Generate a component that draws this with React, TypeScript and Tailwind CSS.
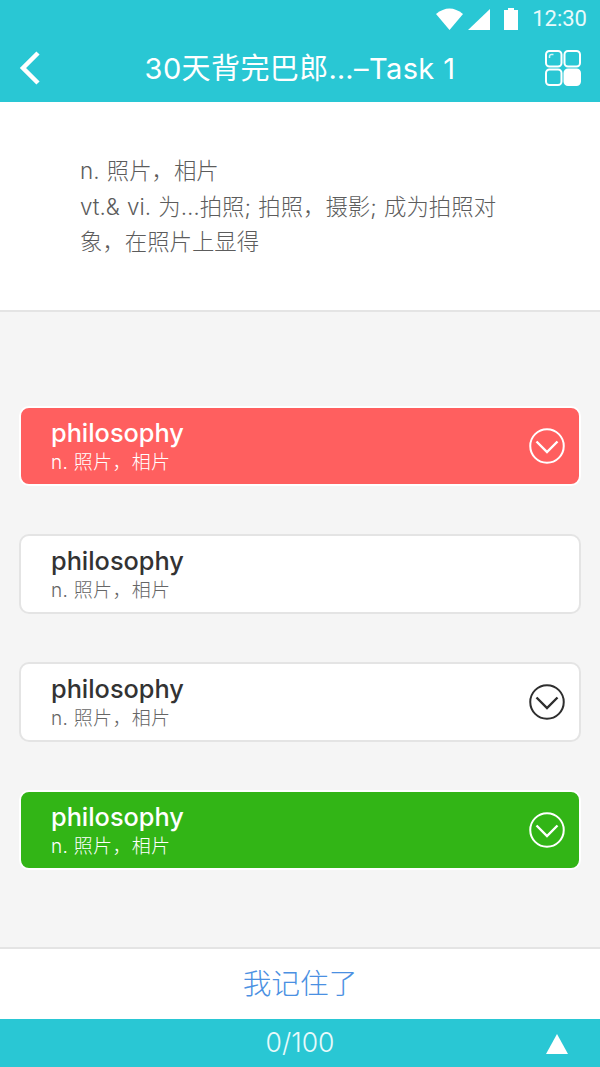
const font = "font-['Inter','Noto_Sans_CJK_SC',sans-serif]";

function ChevronCircle({ color }: { color: string }) {
  return (
    <svg width="36" height="36" viewBox="0 0 36 36" fill="none" stroke={color} strokeWidth="2" className="mt-[-1px]">
      <circle cx="18" cy="18" r="16.75" />
      <path d="M7.5 13.5 L18 24 L28.5 13.5" strokeWidth="2.4" />
    </svg>
  );
}

function WordCard({ variant, icon }: { variant: "red" | "green" | "plain"; icon?: boolean }) {
  const box =
    variant === "red"
      ? "bg-[#ff5f5f] border-[#ffffff] text-white"
      : variant === "green"
        ? "bg-[#32b516] border-[#ffffff] text-white"
        : "bg-white border-[#e4e4e4] text-[#333333]";
  const sub = variant === "plain" ? "text-[#666666]" : "text-white";
  const iconColor = variant === "plain" ? "#2e2e2e" : "#ffffff";
  return (
    <div className={`mx-[19px] flex h-[80px] items-center justify-between rounded-[10px] border-2 pl-[30px] pr-[14px] ${box}`}>
      <div className="flex flex-col">
        <span className="text-[25.3px] font-medium leading-[29px]">philosophy</span>
        <span className={`mt-[3px] text-[19px] font-light leading-[25px] tracking-[0.3px] ${sub}`}>n. 照片，相片</span>
      </div>
      {icon && <ChevronCircle color={iconColor} />}
    </div>
  );
}

export default function App() {
  return (
    <div className={`flex h-[1067px] w-[600px] flex-col overflow-hidden bg-[#f5f5f5] ${font}`}>
      {/* status bar + title */}
      <div className="h-[102px] shrink-0 bg-[#29c7d4] text-white">
        <div className="flex h-[38px] items-center justify-end pr-[13px]">
          <svg width="27" height="22" viewBox="0 0 27 22" fill="white" className="mr-[5px]">
            <path d="M0 6 Q13.5 -5 27 6 L13.5 22 Z" />
          </svg>
          <svg width="22" height="21" viewBox="0 0 22 21" fill="white" className="mr-[14px]">
            <path d="M22 0 V21 H0 Z" />
          </svg>
          <svg width="14" height="22" viewBox="0 0 14 22" fill="white" className="mr-[14px]">
            <path d="M0 2 H4 V0 H10 V2 H14 V22 H0 Z" />
          </svg>
          <span className="font-['Roboto'] text-[22px] leading-none text-[#e8fafb]">12:30</span>
        </div>
        <div className="flex h-[60px] items-center justify-between px-[19px]">
          <svg width="22" height="34" viewBox="0 0 22 34" fill="none" stroke="white" strokeWidth="4.5" className="mr-[14px]">
            <path d="M19 2 L4 17 L19 32" />
          </svg>
          <span className="text-[29px] leading-none tracking-[0.4px]">30天背完巴郎…–Task 1</span>
          <svg width="36" height="36" viewBox="0 0 36 36" fill="none" stroke="white" strokeWidth="2">
            <rect x="1" y="1" width="15.5" height="15.5" rx="3.5" />
            <path d="M4.5 8 V6.5 Q4.5 4.5 6.5 4.5 H8.5" strokeWidth="1.5" opacity="0.8" />
            <rect x="19.5" y="1" width="15.5" height="15.5" rx="3.5" />
            <rect x="1" y="19.5" width="15.5" height="15.5" rx="3.5" />
            <rect x="19.5" y="19.5" width="15.5" height="15.5" rx="3.5" fill="white" />
          </svg>
        </div>
      </div>

      {/* definition */}
      <div className="h-[210px] shrink-0 border-b-2 border-[#e4e4e4] bg-white pl-[80px] pr-[96px] pt-[51px] text-[22.4px] font-light leading-[35.5px] text-[#5c5c5c] [word-spacing:1px]">
        <p>n. 照片，相片</p>
        <p>vt.&amp; vi. 为…拍照; 拍照，摄影; 成为拍照对象，在照片上显得</p>
      </div>

      {/* options */}
      <div className="flex flex-1 flex-col gap-[48px] pt-[94px]">
        <WordCard variant="red" icon />
        <WordCard variant="plain" />
        <WordCard variant="plain" icon />
        <WordCard variant="green" icon />
      </div>

      {/* bottom actions */}
      <div className="flex h-[72px] shrink-0 items-center justify-center border-t-2 border-[#e4e4e4] bg-white text-[28.7px] font-light text-[#4a90e2]">
        我记住了
      </div>
      <div className="relative flex h-[48px] shrink-0 items-center justify-center bg-[#29c7d4] text-[26.5px] font-light text-[#e8fafb]">
        0/100
        <svg width="22" height="20" viewBox="0 0 22 20" fill="white" className="absolute right-[32px] top-[15px]">
          <path d="M11 0 L22 20 H0 Z" />
        </svg>
      </div>
    </div>
  );
}
